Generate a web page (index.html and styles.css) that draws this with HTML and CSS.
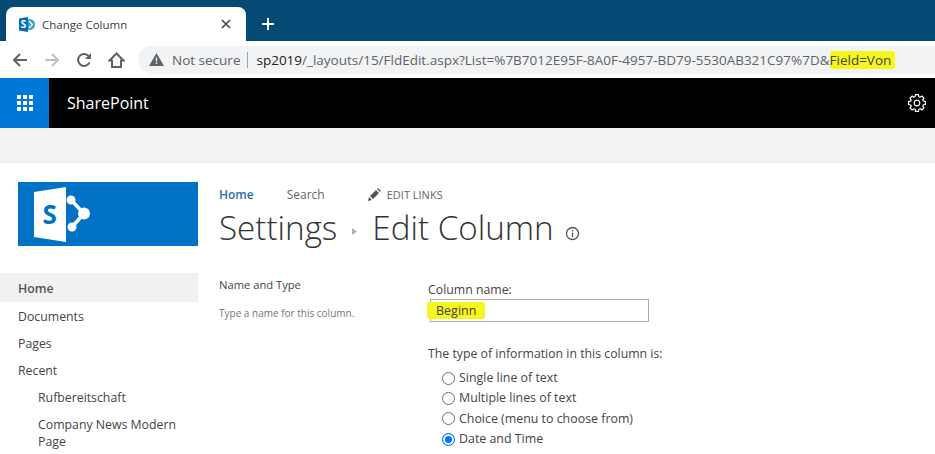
FILE: index.html
```html
<!DOCTYPE html>
<html lang="en">
<head>
  <meta charset="UTF-8" />
  <title>Change Column</title>
  <link rel="stylesheet" href="styles.css">
</head>
<body>
  <div class="tabstrip">
    <div class="tab">
      <svg class="tab-icon" width="17" height="17" viewBox="0 0 17 17">
        <circle cx="11.5" cy="8.5" r="5.5" fill="#38a3c9"/>
        <path d="M11 5l3.500 3.500L11 12" fill="none" stroke="#fff" stroke-width="1.200"/>
        <path d="M1 2.500 10 1v15l-9-1.500z" fill="#0a6cb8"/>
        <text x="2.800" y="12" class="tab-s">S</text>
      </svg>
      <span class="tab-title">Change Column</span>
      <span class="tab-close">
        <svg width="10" height="10" viewBox="0 0 10 10"><path d="M1 1l8 8M9 1l-8 8" stroke="#444" stroke-width="1.6"/></svg>
      </span>
    </div>
    <svg class="new-tab" width="12" height="12" viewBox="0 0 12 12"><path d="M6 0v12M0 6h12" stroke="#fff" stroke-width="2"/></svg>
  </div>

  <div class="toolbar">
    <svg class="nav-btn" width="16" height="16" viewBox="0 0 16 16"><path d="M15 8H2M8 2 2 8l6 6" fill="none" stroke="#5f6368" stroke-width="2"/></svg>
    <svg class="nav-btn" width="16" height="16" viewBox="0 0 16 16"><path d="M1 8h13M8 2l6 6-6 6" fill="none" stroke="#bdc1c6" stroke-width="2"/></svg>
    <svg class="nav-btn" width="16" height="16" viewBox="0 0 16 16"><path d="M13.500 10.500A6 6 0 1 1 13 4.500" fill="none" stroke="#5f6368" stroke-width="2"/><path d="M15 1v6H9z" fill="#5f6368"/></svg>
    <svg class="nav-btn" width="17" height="16" viewBox="0 0 17 16"><path d="M8.500 1.500 1.500 8.500h2.500v6.500h9v-6.500h2.500z" fill="none" stroke="#5f6368" stroke-width="2"/></svg>
    <div class="omnibox">
      <svg class="warn" width="15" height="13" viewBox="0 0 15 13"><path d="M7.500 0 15 13H0z" fill="#5f6368"/><path d="M7.500 4.500v4M7.500 9.500v1.500" stroke="#f1f3f4" stroke-width="1.400"/></svg>
      <span class="not-secure">Not secure</span>
      <span class="url"><span class="url-host">sp2019</span>/_layouts/15/FldEdit.aspx?List=%7B7012E95F-8A0F-4957-BD79-5530AB321C97%7D&amp;<span class="mark">Field=Von</span></span>
    </div>
  </div>

  <div class="suitebar">
    <div class="waffle">
      <svg width="16" height="16" viewBox="0 0 16 16" fill="#fff">
        <rect x="0" y="0" width="4" height="4"/><rect x="6" y="0" width="4" height="4"/><rect x="12" y="0" width="4" height="4"/>
        <rect x="0" y="6" width="4" height="4"/><rect x="6" y="6" width="4" height="4"/><rect x="12" y="6" width="4" height="4"/>
        <rect x="0" y="12" width="4" height="4"/><rect x="6" y="12" width="4" height="4"/><rect x="12" y="12" width="4" height="4"/>
      </svg>
    </div>
    <span class="brand">SharePoint</span>
    <svg class="gear" width="18" height="18" viewBox="-9 -9 18 18" fill="none" stroke="#fff" stroke-width="1.200">
      <defs><path id="tooth" d="M-1.790-6.250-1.480-8.370 1.480-8.370 1.790-6.250A6.500 6.500 0 0 1 3.150-5.690"/></defs>
      <circle r="2.800"/>
      <use href="#tooth"/>
      <use href="#tooth" transform="rotate(45)"/>
      <use href="#tooth" transform="rotate(90)"/>
      <use href="#tooth" transform="rotate(135)"/>
      <use href="#tooth" transform="rotate(180)"/>
      <use href="#tooth" transform="rotate(225)"/>
      <use href="#tooth" transform="rotate(270)"/>
      <use href="#tooth" transform="rotate(315)"/>
    </svg>
  </div>

  <div class="ribbon"></div>

  <div class="page">
    <aside class="sidebar">
      <div class="logo">
        <svg width="57" height="55" viewBox="0 0 57 55">
          <path d="M0 5 32 0v55L0 50z" fill="#fff"/>
          <text x="8.500" y="37" class="logo-s">S</text>
          <path d="M37 13 50 26.500 38 40" fill="none" stroke="#fff" stroke-width="3.500"/>
          <circle cx="37" cy="13" r="4.500" fill="#fff"/>
          <circle cx="50" cy="26.500" r="6" fill="#fff"/>
          <circle cx="38" cy="40" r="4.500" fill="#fff"/>
        </svg>
      </div>
      <nav class="quicklaunch">
        <a class="ql-item ql-selected">Home</a>
        <a class="ql-item">Documents</a>
        <a class="ql-item">Pages</a>
        <a class="ql-item">Recent</a>
        <a class="ql-item ql-sub">Rufbereitschaft</a>
        <a class="ql-item ql-sub">Company News Modern Page</a>
      </nav>
    </aside>

    <main class="content">
      <div class="topnav">
        <a class="topnav-home">Home</a>
        <a class="topnav-link">Search</a>
        <a class="edit-links">
          <svg width="13" height="13" viewBox="0 0 13 13"><path d="M0 13l1-4 3 3zM2 8l6-6 3 3-6 6zM9 1l1-1 3 3-1 1z" fill="#555"/></svg>
          EDIT LINKS
        </a>
      </div>
      <h1 class="page-title">
        <span>Settings</span>
        <svg class="crumb-arrow" width="5" height="7" viewBox="0 0 5 7"><path d="M0 0l5 3.500L0 7z" fill="#b1b1b1"/></svg>
        <span>Edit Column</span>
        <svg class="info" width="15" height="15" viewBox="0 0 15 15"><circle cx="7.500" cy="7.500" r="6" fill="none" stroke="#555" stroke-width="1.300"/><path d="M7.500 6.500v4.500M7.500 4v1.500" stroke="#555" stroke-width="1.300"/></svg>
      </h1>
      <div class="form">
        <div class="form-desc">
          <h3 class="section-title">Name and Type</h3>
          <p class="section-help">Type a name for this column.</p>
        </div>
        <div class="form-body">
          <label class="field-label">Column name:</label>
          <div class="textbox"><span class="mark mark-input">Beginn</span></div>
          <p class="field-label type-label">The type of information in this column is:</p>
          <ul class="radios">
            <li><span class="radio"></span>Single line of text</li>
            <li><span class="radio"></span>Multiple lines of text</li>
            <li><span class="radio"></span>Choice (menu to choose from)</li>
            <li><span class="radio radio-on"></span>Date and Time</li>
          </ul>
        </div>
      </div>
    </main>
  </div>
</body>
</html>
```

FILE: styles.css
```css
html, body {
  margin: 0;
  height: 454px;
  overflow: hidden;
}
body {
  font-family: 'Open Sans', 'Noto Sans', sans-serif;
  background: #fff;
  color: #444;
}

/* browser chrome */
.tabstrip {
  height: 41px;
  background: #054a74;
  display: flex;
  align-items: flex-end;
  padding-left: 6px;
  box-sizing: border-box;
}
.tab {
  width: 240px;
  height: 34px;
  background: #fff;
  border-radius: 8px 8px 0 0;
  display: flex;
  align-items: center;
  padding: 0 12px;
  box-sizing: border-box;
}
.tab-icon {
  margin-right: 7px;
}
.tab-s {
  font-size: 10px;
  font-weight: 700;
  fill: #fff;
}
.tab-title {
  font-size: 11.500px;
  color: #3c4043;
  flex: 1;
}
.tab-close {
  display: flex;
  margin-right: 3px;
}
.new-tab {
  margin: 0 0 11px 16px;
}
.toolbar {
  height: 37px;
  display: flex;
  align-items: center;
  padding-left: 12px;
  box-sizing: border-box;
  background: #fff;
}
.nav-btn {
  margin-right: 16px;
  flex: none;
}
.omnibox {
  flex: 1;
  height: 28px;
  margin-left: -3px;
  background: #f1f3f4;
  border-radius: 14px 0 0 14px;
  display: flex;
  align-items: center;
  padding-left: 11px;
  font-size: 13.500px;
  white-space: nowrap;
  overflow: hidden;
}
.warn {
  flex: none;
  margin-right: 8px;
}
.not-secure {
  color: #5f6368;
  padding-right: 7px;
  border-right: 1px solid #9aa0a6;
  margin-right: 8px;
  line-height: 16px;
}
.url {
  color: #5f6368;
}
.url-host {
  color: #202124;
}
.mark {
  background: #f6f61e;
  color: #444;
  border-radius: 3px;
  padding-right: 4px;
}

/* suite bar */
.suitebar {
  height: 50px;
  background: #000;
  display: flex;
  align-items: center;
}
.waffle {
  width: 49px;
  height: 50px;
  background: #0078d7;
  display: flex;
  align-items: center;
  justify-content: center;
}
.brand {
  color: #fff;
  font-size: 16px;
  margin-left: 18px;
  flex: 1;
}
.gear {
  margin-right: 9px;
}
.ribbon {
  height: 35px;
  background: #f2f2f2;
  border-bottom: 1px solid #e8e8e8;
  box-sizing: border-box;
}

/* page */
.page {
  display: flex;
}
.sidebar {
  width: 198px;
  flex: none;
  padding-top: 19px;
}
.logo {
  margin-left: 18px;
  height: 64px;
  background: #0072c6;
  display: flex;
  align-items: center;
  padding-left: 16px;
  box-sizing: border-box;
}
.logo-s {
  font-size: 26px;
  font-weight: 700;
  fill: #0072c6;
}
.quicklaunch {
  margin-top: 27px;
  display: flex;
  flex-direction: column;
}
.ql-item {
  font-size: 12.300px;
  line-height: 17px;
  padding: 6px 18px 4px;
  color: #444;
}
.ql-selected {
  background: #f1f1f1;
  font-weight: 600;
  padding: 7px 18px 5px;
  color: #555;
}
.ql-sub {
  padding-left: 38px;
  padding-right: 12px;
}
.content {
  flex: 1;
  padding: 21px 0 0 21px;
}
.topnav {
  display: flex;
  align-items: center;
  height: 20px;
  font-size: 12px;
}
.topnav-home {
  color: #2a6ea6;
  font-weight: 600;
  margin-right: 33px;
}
.topnav-link {
  color: #666;
  margin-right: 43px;
}
.edit-links {
  color: #666;
  font-size: 11px;
  display: flex;
  align-items: center;
  gap: 6px;
}
.page-title {
  margin: 2px 0 0;
  font-size: 33.200px;
  font-weight: 300;
  line-height: 44px;
  color: #333;
  display: flex;
  align-items: center;
}
.crumb-arrow {
  margin: 6px 15px 0 15px;
}
.info {
  margin: 10px 0 0 11px;
}
.form {
  display: flex;
  margin-top: 27px;
}
.form-desc {
  width: 209px;
  flex: none;
}
.section-title {
  margin: 0;
  font-size: 11.200px;
  font-weight: 400;
  color: #444;
  line-height: 16px;
}
.section-help {
  margin: 13px 0 0;
  font-size: 10px;
  color: #777;
  line-height: 14px;
}
.form-body {
  flex: 1;
}
.field-label {
  display: block;
  font-size: 12.300px;
  line-height: 16px;
  color: #444;
  margin: 5px 0 0;
}
.textbox {
  width: 219px;
  height: 23px;
  border: 1px solid #ababab;
  box-sizing: border-box;
  margin: 1px 0 0 2px;
  display: flex;
  align-items: center;
  font-size: 12.500px;
}
.mark-input {
  padding: 0 9px 0 9px;
  margin-left: -4px;
}
.type-label {
  margin-top: 24px;
}
.radios {
  list-style: none;
  margin: 6px 0 0;
  padding: 0 0 0 14px;
}
.radios li {
  display: flex;
  align-items: center;
  font-size: 12.400px;
  line-height: 20.300px;
}
.radio {
  width: 11px;
  height: 11px;
  border: 1px solid #6b6b6b;
  border-radius: 50%;
  margin-right: 4px;
}
.radio-on {
  border-color: #0075ff;
  box-shadow: inset 0 0 0 2px #fff;
  background: #0075ff;
}
```
